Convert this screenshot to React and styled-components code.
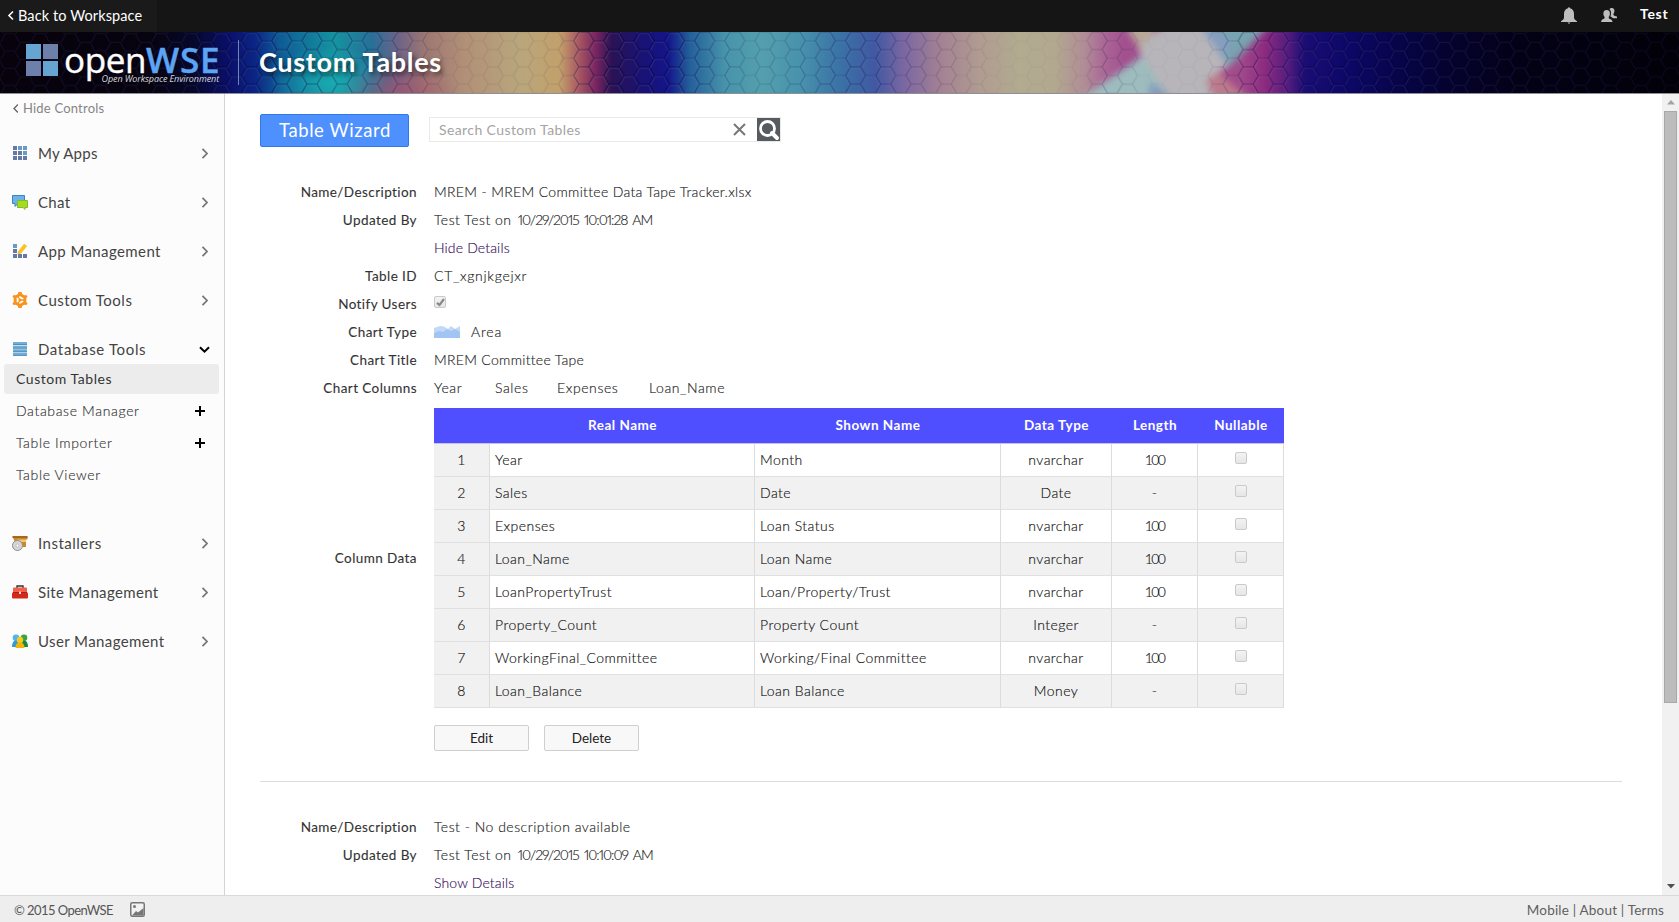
import React from "react";
import styled, { createGlobalStyle, css } from "styled-components";

const Global = createGlobalStyle`
  * { box-sizing: border-box; }
  html, body { margin: 0; height: 100%; overflow: hidden; }
  body { font-family: Lato, "Open Sans", sans-serif; font-size: 14px; color: #474747; background: #fff; }
  button, input, table { font-family: inherit; }
`;

const Page = styled.div`
  display: flex;
  flex-direction: column;
  width: 100vw;
  height: 100vh;
`;

const TopBar = styled.div`
  display: flex;
  justify-content: space-between;
  flex: 0 0 32px;
  background: #151515;
  color: #fff;
`;
const BackLink = styled.a`
  display: flex;
  align-items: center;
  gap: 4px;
  width: 157px;
  padding: 0 0 2px 7px;
  background: #1a1a1a;
  font-size: 14.5px;
  letter-spacing: 0.1px;
  white-space: nowrap;
`;
const TopActions = styled.div`
  display: flex;
  align-items: center;
  gap: 24px;
  padding: 0 10px 2px 0;
  svg { display: block; }
`;
const UserName = styled.span`
  width: 29px;
  padding-bottom: 2px;
  font-size: 14px;
  font-weight: 700;
  line-height: 18px;
  letter-spacing: 0.7px;
  margin-left: -1px;
`;

const Banner = styled.header`
  position: relative;
  display: flex;
  align-items: center;
  flex: 0 0 62px;
  padding-left: 26px;
  border-bottom: 1px solid #8f8f98;
  overflow: hidden;
`;
const Backdrop = styled.svg`
  position: absolute;
  inset: 0;
`;
const Logo = styled.div`
  position: relative;
  display: flex;
  width: 213px;
  height: 45px;
  border-right: 1px solid rgba(255, 255, 255, 0.45);
`;
const LogoTiles = styled.div`
  display: grid;
  grid-template-columns: 15px 15px;
  grid-template-rows: 15px 15px;
  gap: 2px;
  margin: 4px 6px 0 0;
`;
const Tile = styled.i`
  background: ${(p) => (p.$alt ? "#6d7fab" : "#66a5d2")};
`;
const LogoText = styled.div`
  display: flex;
  flex-direction: column;
  width: 155px;
  font-family: "Open Sans", "Noto Sans", sans-serif;
  color: #fff;
  white-space: nowrap;
`;
const LogoName = styled.div`
  height: 34px;
  font-size: 35px;
  line-height: 39px;
  letter-spacing: -0.4px;
  -webkit-text-stroke: 0.4px currentColor;
  b { font-weight: 600; color: #5ca5f5; letter-spacing: 0.8px; }
`;
const Tagline = styled.div`
  align-self: flex-end;
  font-size: 9px;
  line-height: 10px;
  font-style: italic;
  color: #d8d8dc;
  letter-spacing: -0.1px;
`;
const PageTitle = styled.h1`
  position: relative;
  margin: 0 0 2px 20px;
  font-size: 27px;
  font-weight: 700;
  line-height: 32px;
  letter-spacing: 0.7px;
  color: #fff;
  text-shadow: 2px 3px 5px rgba(0, 0, 0, 0.6);
`;

const Body = styled.div`
  display: flex;
  flex: 1 1 0;
  min-height: 0;
`;
const Sidebar = styled.nav`
  flex: 0 0 225px;
  border-right: 1px solid #d4d4d4;
  background: #fcfcfc;
`;
const HideControls = styled.a`
  display: flex;
  align-items: center;
  gap: 5px;
  height: 28px;
  padding-left: 12px;
  font-size: 13px;
  letter-spacing: 0.2px;
  color: #858585;
`;
const MenuItem = styled.a`
  display: flex;
  align-items: center;
  height: 30px;
  margin-top: ${(p) => p.$top ?? 19}px;
  padding: 0 14px 1px 12px;
  font-size: 15px;
  letter-spacing: ${(p) => p.$ls ?? 0.25}px;
  color: #444;
  > svg:first-child { flex: none; margin-right: 10px; }
  > svg:last-child { flex: none; margin: 2px 0 0 auto; }
`;
const SubMenu = styled.div`
  display: flex;
  flex-direction: column;
  gap: 2px;
  margin: 0 5px 38px 4px;
`;
const SubItem = styled.a`
  display: flex;
  align-items: center;
  justify-content: space-between;
  height: 30px;
  padding: 0 14px 1px 12px;
  border-radius: 3px;
  font-size: 14px;
  font-weight: 300;
  letter-spacing: 0.65px;
  color: #333;
  -webkit-text-stroke: 0.15px currentColor;
  ${(p) => p.$active && css`background: #ececec; font-weight: 400; letter-spacing: 0.55px; -webkit-text-stroke: 0;`}
`;

const Main = styled.main`
  flex: 1;
  min-width: 0;
  padding: 20px 40px 0 35px;
  overflow: hidden;
`;
const Tools = styled.div`
  display: flex;
  height: 33px;
`;
const WizardButton = styled.button`
  width: 149px;
  height: 33px;
  margin-right: 20px;
  padding: 0 0 1px 1px;
  border: 1px solid #3079ed;
  border-radius: 2px;
  background: #4d90fe;
  color: #fff;
  font-size: 18.5px;
  letter-spacing: 0.6px;
`;
const Search = styled.div`
  display: flex;
  align-items: center;
  width: 352px;
  height: 25px;
  margin-top: 3px;
  border: 1px solid #e9e9e9;
  padding-left: 9px;
  color: #a4a4a4;
  letter-spacing: 0.4px;
  > svg:nth-of-type(1) { margin-left: auto; margin-right: 11px; }
  > svg { flex: none; }
`;

const Entry = styled.section`
  display: grid;
  grid-template-columns: 157px 1fr;
  column-gap: 17px;
  grid-auto-rows: minmax(28px, auto);
  align-items: center;
  padding-top: ${(p) => p.$top}px;
`;
const Label = styled.div`
  text-align: right;
  margin-top: ${(p) => (p.$low ? 6 : 0)}px;
  font-size: 13.5px;
  color: #333;
  letter-spacing: 0.42px;
  -webkit-text-stroke: 0.1px currentColor;
`;
const Value = styled.div`
  display: flex;
  align-items: center;
  height: 28px;
  padding-bottom: 1px;
  color: #222;
  font-weight: 300;
  letter-spacing: ${(p) => p.$ls ?? 0.5}px;
  white-space: pre;
  -webkit-text-stroke: 0.15px currentColor;
`;
const DateText = styled.span`
  margin-left: 2px;
  font-variant-numeric: proportional-nums;
  letter-spacing: -1px;
  word-spacing: 2.5px;
`;
const DetailsLink = styled.a`
  color: #36105c;
  letter-spacing: 0.15px;
`;
const ChartColumn = styled.span`
  width: ${(p) => p.$w}px;
`;
const Check = styled.i`
  display: inline-flex;
  align-items: center;
  justify-content: center;
  width: 12px;
  height: 12px;
  margin-bottom: ${(p) => (p.$inCell ? 1 : 3)}px;
  border: 1px solid #cacaca;
  border-radius: 2px;
  background: linear-gradient(#f3f3f3, #e6e6e6);
`;

const Grid = styled.table`
  width: 850px;
  margin: 6px 0 0;
  table-layout: fixed;
  border-collapse: separate;
  border-spacing: 0;
  color: #111;
`;
const HeadCell = styled.th`
  height: 36px;
  padding: 0 0 2px;
  background: #4f4fff;
  border-bottom: 1px solid #c3c3ee;
  color: #fff;
  font-size: 13.5px;
  font-weight: 700;
  letter-spacing: 0.5px;
`;
const Cell = styled.td`
  height: 33px;
  padding: 0 5px 1px;
  border-right: 1px solid #dcdcdc;
  border-bottom: 1px solid #e0e0e0;
  text-align: ${(p) => (p.$left ? "left" : "center")};
  font-weight: 300;
  letter-spacing: ${(p) => (p.$digits ? -1.6 : 0.45)}px;
  -webkit-text-stroke: 0.15px currentColor;
  background: ${(p) => (p.$shade ? "#f1f1f1" : "#fff")};
`;
const Buttons = styled.div`
  display: flex;
  gap: 15px;
  margin-top: 17px;
`;
const SmallButton = styled.button`
  width: 95px;
  height: 26px;
  padding: 0 0 1px;
  border: 1px solid #cfcfcf;
  border-radius: 2px;
  background: #f8f8f8;
  color: #222;
  font-size: 13.5px;
`;
const Rule = styled.hr`
  height: 1px;
  margin: 30px 0 0;
  border: 0;
  background: #dcdcdc;
`;

const ScrollTrack = styled.div`
  display: flex;
  flex-direction: column;
  align-items: center;
  flex: 0 0 17px;
  background: #f1f1f1;
`;
const ScrollArrow = styled.div`
  display: flex;
  align-items: center;
  justify-content: center;
  height: 17px;
  margin-top: ${(p) => (p.$last ? "auto" : 0)};
`;
const Thumb = styled.div`
  width: 13px;
  height: 592px;
  border: 1px solid #a8a8a8;
  background: #bcbcbc;
`;

const Footer = styled.footer`
  display: flex;
  align-items: center;
  flex: 0 0 27px;
  padding: 1px 15px 0 14px;
  border-top: 1px solid #d9d9d9;
  background: #eee;
  color: #555;
  font-size: 13px;
  > svg { margin-left: 17px; }
`;
const Copyright = styled.span`
  width: 99px;
  letter-spacing: -0.55px;
  white-space: nowrap;
`;
const FooterLinks = styled.div`
  margin-left: auto;
  font-size: 13.5px;
  letter-spacing: 0.2px;
  color: #606060;
`;

const Chevron = ({ dir = "right", size = 10, color = "#777", w = 1.8 }) => {
  const d = { right: "M2.5 .8 7 5.5 2.5 10.2", left: "M6 1.5 2 5.5 6 9.5", down: "M1 3.2 5.5 7.7 10 3.2" }[dir];
  return (
    <svg width={size} height="11" viewBox={`0 0 ${size} 11`} fill="none" stroke={color} strokeWidth={w}>
      <path d={d} />
    </svg>
  );
};
const Plus = () => (
  <svg width="10" height="10"><path d="M5 0v10M0 5h10" stroke="#000" strokeWidth="2" /></svg>
);

const icons = {
  apps: (
    <g>
      {[0, 1, 2].map((r) => [0, 1, 2].map((c) => (
        <rect key={`${r}${c}`} x={1 + c * 5} y={1 + r * 5} width="4" height="4" fill={r + (2 - c) < 2 || (r === 0 && c === 1) ? "#6a9bc6" : "#6679a6"} />
      )))}
    </g>
  ),
  chat: (
    <g>
      <path d="M.5 1.5h12v8H6L3 12.500V9.500H.5z" fill="#6fb3e4" stroke="#3a86c4" />
      <path d="M5.500 6.500h10v7H13v2L11 13.500H5.500z" fill="#a6dc1c" stroke="#7dba35" />
    </g>
  ),
  manage: (
    <g fill="#6679a6">
      <path d="M1 1h4v4H1z" fill="#6a9bc6" />
      <path d="M1 6h4v4H1zM1 11h4v4H1zM6 11h4v4H6zM11 11h4v4h-4z" />
      <path d="M5.500 11.500 6.300 8 12 .8 15.200 3 9.500 10z" fill="#f8c623" />
      <path d="m5.500 11.500.8-3.500 3.200 2z" fill="#e9b46a" />
    </g>
  ),
  gear: (
    <g>
      <path d="M8 2.500 12.800 5.200v5.600L8 13.500 3.200 10.800V5.200z" fill="none" stroke="#f7941d" strokeWidth="3" strokeLinejoin="round" />
      <g fill="#f7941d"><rect x="6" y="0" width="4" height="3" rx="1" /><rect x="6" y="13" width="4" height="3" rx="1" /><circle cx="2.300" cy="4.500" r="1.600" /><circle cx="13.700" cy="4.500" r="1.600" /><circle cx="2.300" cy="11.500" r="1.600" /><circle cx="13.700" cy="11.500" r="1.600" /></g>
      <path d="M8 8h4M8 8 6 4.500M8 8l-2 3.500" stroke="#f7941d" strokeWidth="1.300" />
      <circle cx="8" cy="8" r="1.500" fill="#f7941d" />
    </g>
  ),
  database: (
    <g>{[1, 4.600, 8.200, 11.800].map((y) => <g key={y}><rect x="1" y={y} width="14" height="3" fill="#74aed6" /><rect x="1" y={y + 2} width="14" height="1" fill="#4f8fbd" /></g>)}</g>
  ),
  installers: (
    <g>
      <path d="M.5 1.500h15v3h-1.500V12H6L2 5z" fill="#c98a2f" />
      <path d="M.5 1h15v2H.5z" fill="#a8671c" />
      <path d="M5 4.500h9V7H6z" fill="#f0c878" />
      <circle cx="5.500" cy="10.500" r="5" fill="#d6d6d6" stroke="#8c8c8c" />
      <circle cx="5.500" cy="10.500" r="1.500" fill="#fff" stroke="#aaa" strokeWidth=".7" />
    </g>
  ),
  toolbox: (
    <g>
      <path d="M5 4V2h6v2" fill="none" stroke="#333" strokeWidth="1.400" />
      <rect x="1" y="3.500" width="14" height="6" rx="1" fill="#f0604c" />
      <rect x="0" y="8.500" width="16" height="6" rx="1" fill="#d3281c" />
      <path d="M1 8.500h14" stroke="#b01c14" />
      <path d="M7 7.500h2V10H7z" fill="#f4d9d0" />
    </g>
  ),
  users: (
    <g>
      <circle cx="4" cy="4.800" r="3.300" fill="#4fb5ea" /><path d="M0 14c0-5 2-6.500 4-6.500S8 9 8 14z" fill="#2f9bd8" />
      <circle cx="12" cy="4.800" r="3.300" fill="#3aa53f" /><path d="M8 14c0-5 2-6.500 4-6.500s4 1.500 4 6.500z" fill="#178a3a" />
      <circle cx="8" cy="7" r="3.200" fill="#f9c922" /><path d="M3.500 15c0-4 2-5.500 4.500-5.500s4.500 1.500 4.500 5.500z" fill="#f3b410" />
    </g>
  ),
};
const MenuIcon = ({ name }) => <svg width="16" height="16" viewBox="0 0 16 16">{icons[name]}</svg>;

const HEX = "M-10 0 -5 -8.650H5L10 0 5 8.650H-5z";
const SHINE = "M-9 1 -4.500 -7.400H4.500L9 1";
const hexCells = ["", "translate(30.200 0)", "translate(0 17.300)", "translate(30.200 17.300)", "translate(15.100 8.650)"];
const spectrum = [
  [0, "#07020b"], [150, "#07030f"], [195, "#06082c"], [228, "#0a0f68"], [255, "#0b2585"], [280, "#0f5c96"], [335, "#14939f"],
  [372, "#286f98"], [398, "#6d6386"], [425, "#9c7772"], [465, "#b19077"], [520, "#b9a67c"], [560, "#c2a06a"],
  [577, "#aa5e62"], [595, "#7c2760"], [612, "#2a1255"], [640, "#1a1272"], [668, "#13158a"], [690, "#24609a"],
  [725, "#4793ab"], [762, "#549fad"], [800, "#4892ac"], [840, "#3a72a6"], [875, "#4158a2"], [905, "#7c68a2"],
  [940, "#a38193"], [980, "#b09c90"], [1020, "#b2ab90"], [1055, "#b2a88f"], [1085, "#b08c96"], [1105, "#aa6595"], [1125, "#a2508e"],
  [1240, "#a24a8a"], [1265, "#8c2a80"], [1288, "#541c7e"], [1305, "#1a0d74"], [1345, "#0d0868"], [1400, "#070449"],
  [1450, "#05022e"], [1520, "#030115"], [1679, "#020108"],
];
const hexStrength = [
  [0, 0.4], [190, 0.5], [240, 0.6], [400, 0.35], [450, 0.1], [555, 0.12], [600, 0.75], [670, 0.65], [720, 0.3], [760, 0.2],
  [860, 0.4], [960, 0.16], [1000, 0.04], [1070, 0.05], [1110, 0.3], [1150, 0.03], [1205, 0.05], [1240, 0.45], [1400, 0.6], [1679, 0.3],
];
const BannerArt = () => (
  <Backdrop width="1679" height="61" viewBox="0 0 1679 61" preserveAspectRatio="none">
    <defs>
      <linearGradient id="spectrum" gradientUnits="userSpaceOnUse" x1="0" x2="1679" y1="0" y2="0">
        {spectrum.map(([x, c]) => <stop key={x} offset={x / 1679} stopColor={c} />)}
      </linearGradient>
      <radialGradient id="teal"><stop offset="0" stopColor="#1ab0b4" stopOpacity=".8" /><stop offset="1" stopColor="#1ab0b4" stopOpacity="0" /></radialGradient>
      <radialGradient id="rose"><stop offset="0" stopColor="#a8506c" stopOpacity=".7" /><stop offset="1" stopColor="#a8506c" stopOpacity="0" /></radialGradient>
      <pattern id="hexes" width="30.200" height="17.300" patternUnits="userSpaceOnUse" patternTransform="translate(10 9)">
        <g fill="none" stroke="#00003a" strokeOpacity=".45" strokeWidth="1.200">
          {hexCells.map((t) => <path key={t} d={HEX} transform={t} />)}
        </g>
        <g fill="none" stroke="#fff" strokeOpacity=".14">
          {hexCells.map((t) => <path key={t} d={SHINE} transform={t} />)}
        </g>
      </pattern>
      <linearGradient id="hexFade" gradientUnits="userSpaceOnUse" x1="0" x2="1679" y1="0" y2="0">
        {hexStrength.map(([x, o]) => <stop key={x} offset={x / 1679} stopColor="#fff" stopOpacity={o} />)}
      </linearGradient>
      <mask id="hexMask"><rect width="1679" height="61" fill="url(#hexFade)" /></mask>
      <filter id="soft" x="-20%" y="-50%" width="140%" height="200%"><feGaussianBlur stdDeviation="3.500" /></filter>
    </defs>
    <rect width="1679" height="61" fill="url(#spectrum)" />
    <ellipse cx="330" cy="50" rx="58" ry="36" fill="url(#teal)" />
    <ellipse cx="400" cy="62" rx="60" ry="34" fill="url(#rose)" />
    <g filter="url(#soft)">
      <path d="M1124 -8h30V20L1144 24z" fill="#b8a898" />
      <path d="M1178 -8h92L1230 34 1216 38 1180 10z" fill="#78a3b0" />
      <path d="M1076 70 1128 34 1150 18 1205 70z" fill="#9dbcbe" />
      <path d="M1150 50 1180 70h-30z" fill="#7f98bc" />
      <path d="M1196 -8h16L1232 12 1222 30 1204 14z" fill="#8a9cc4" fillOpacity=".7" />
      <path d="M1138 18 1164 -8h34L1228 34 1208 48 1218 70h-46z" fill="#b7b5b9" />
      <path d="M1206 48 1218 40 1252 70H1214z" fill="#bc7a8c" />
    </g>
    <rect width="1679" height="61" fill="url(#hexes)" mask="url(#hexMask)" />
  </Backdrop>
);

const columns = [
  ["Year", "Month", "nvarchar", "100"],
  ["Sales", "Date", "Date", "-"],
  ["Expenses", "Loan Status", "nvarchar", "100"],
  ["Loan_Name", "Loan Name", "nvarchar", "100"],
  ["LoanPropertyTrust", "Loan/Property/Trust", "nvarchar", "100"],
  ["Property_Count", "Property Count", "Integer", "-"],
  ["WorkingFinal_Committee", "Working/Final Committee", "nvarchar", "100"],
  ["Loan_Balance", "Loan Balance", "Money", "-"],
];

const Item = ({ icon, children, top, open, ls }) => (
  <MenuItem $top={top} $ls={ls}>
    <MenuIcon name={icon} />
    {children}
    {open ? <Chevron dir="down" size={11} color="#000" w={2} /> : <Chevron />}
  </MenuItem>
);

export default function App() {
  return (
    <Page>
      <Global />
      <TopBar>
        <BackLink><Chevron dir="left" size={7} color="#fff" w={1.6} />Back to Workspace</BackLink>
        <TopActions>
          <svg width="16" height="17" viewBox="0 0 16 17" fill="#bdbdbd">
            <path d="M7 1.200a1 1 0 0 1 2 0C12 2 13 4.300 13 7v3.500c0 1.500 1 2.500 3 3.700v.8H0v-.8c2-1.200 3-2.200 3-3.700V7c0-2.700 1-5 4-5.800zM6.500 15.500h3L8 17z" />
          </svg>
          <svg width="16" height="15" viewBox="0 0 17 16" fill="#bdbdbd">
            <path d="M10.500 0c2.500-.3 3.800 1 3.800 3 0 1.400-.4 2.500-1.100 3.300.1 1.700.5 2 3.800 2.700v2h-4.200c-.7-1-2-1.600-2.800-2 .8-2.200 1.400-5.500-1-8z" />
            <path d="M6 2c2.400 0 3.500 1.500 3.500 3.800 0 1.700-.6 3-1.300 3.700v1.500C10 12 12 12.300 12.300 15H0c.3-2.700 2-3 3.800-4V9.500C3 8.800 2.500 7.500 2.500 5.800 2.500 3.500 3.600 2 6 2z" />
          </svg>
          <UserName>Test</UserName>
        </TopActions>
      </TopBar>

      <Banner>
        <BannerArt />
        <Logo>
          <LogoTiles><Tile /><Tile $alt /><Tile $alt /><Tile /></LogoTiles>
          <LogoText>
            <LogoName>open<b>WSE</b></LogoName>
            <Tagline>Open Workspace Environment</Tagline>
          </LogoText>
        </Logo>
        <PageTitle>Custom Tables</PageTitle>
      </Banner>

      <Body>
        <Sidebar>
          <HideControls><Chevron dir="left" size={6} color="#666" w={1.400} />Hide Controls</HideControls>
          <Item icon="apps" top={16}>My Apps</Item>
          <Item icon="chat" ls={0.35}>Chat</Item>
          <Item icon="manage" ls={0.4}>App Management</Item>
          <Item icon="gear" ls={0.5}>Custom Tools</Item>
          <Item icon="database" ls={0.65} open>Database Tools</Item>
          <SubMenu>
            <SubItem $active>Custom Tables</SubItem>
            <SubItem>Database Manager<Plus /></SubItem>
            <SubItem>Table Importer<Plus /></SubItem>
            <SubItem>Table Viewer</SubItem>
          </SubMenu>
          <Item icon="installers" top={0} ls={0.5}>Installers</Item>
          <Item icon="toolbox" ls={0.35}>Site Management</Item>
          <Item icon="users" ls={0.4}>User Management</Item>
        </Sidebar>

        <Main>
          <Tools>
            <WizardButton>Table Wizard</WizardButton>
            <Search>
              Search Custom Tables
              <svg width="13" height="13" stroke="#777" strokeWidth="2"><path d="m1 1 11 11M12 1 1 12" /></svg>
              <svg width="23" height="23" viewBox="0 0 23 23" fill="none" stroke="#fff">
                <path d="M0 0h23v23H0z" fill="#565b61" stroke="none" />
                <circle cx="10.500" cy="10.500" r="7" strokeWidth="2.800" />
                <path d="m15 15 5 5" strokeWidth="4" strokeLinecap="round" />
              </svg>
            </Search>
          </Tools>

          <Entry $top={31}>
            <Label>Name/Description</Label>
            <Value $ls={0.33}>MREM - MREM Committee Data Tape Tracker.xlsx</Value>
            <Label>Updated By</Label>
            <Value>Test Test on <DateText>10/29/2015 10:01:28 AM</DateText></Value>
            <span />
            <Value><DetailsLink>Hide Details</DetailsLink></Value>
            <Label>Table ID</Label>
            <Value $ls={0.7}>CT_xgnjkgejxr</Value>
            <Label>Notify Users</Label>
            <Value>
              <Check><svg width="9" height="9" fill="none" stroke="#888" strokeWidth="2.200"><path d="M1 4.800 3.500 7 8 1" /></svg></Check>
            </Value>
            <Label>Chart Type</Label>
            <Value $ls={0.8}>
              <ChartColumn $w={37}>
                <svg width="26" height="13" viewBox="0 0 26 13" display="block">
                  <path d="M0 3 6 1l4 .5L14 4l3-3 4 3 5-3v12H0z" fill="#c3d8f6" />
                  <path d="M0 8 5 6l4 1 4-3 4 2 4-2 5 3v6H0z" fill="#a2c4f2" />
                </svg>
              </ChartColumn>
              Area
            </Value>
            <Label>Chart Title</Label>
            <Value $ls={0.3}>MREM Committee Tape</Value>
            <Label>Chart Columns</Label>
            <Value $ls={0.6}>
              <ChartColumn $w={61}>Year</ChartColumn>
              <ChartColumn $w={62}>Sales</ChartColumn>
              <ChartColumn $w={92}>Expenses</ChartColumn>
              <ChartColumn $w={80}>Loan_Name</ChartColumn>
            </Value>
            <Label $low>Column Data</Label>
            <Grid>
              <colgroup>
                {[56, 265, 246, 111, 86, 86].map((w, i) => <col key={i} width={w} />)}
              </colgroup>
              <thead>
                <tr>{["", "Real Name", "Shown Name", "Data Type", "Length", "Nullable"].map((h) => <HeadCell key={h}>{h}</HeadCell>)}</tr>
              </thead>
              <tbody>
                {columns.map(([real, shown, type, length], i) => {
                  const shade = i % 2 === 1;
                  return (
                    <tr key={real}>
                      <Cell $shade>{i + 1}</Cell>
                      <Cell $left $shade={shade}>{real}</Cell>
                      <Cell $left $shade={shade}>{shown}</Cell>
                      <Cell $shade={shade}>{type}</Cell>
                      <Cell $shade={shade} $digits={length !== "-"}>{length}</Cell>
                      <Cell $shade={shade}><Check $inCell /></Cell>
                    </tr>
                  );
                })}
              </tbody>
            </Grid>
            <span />
            <Buttons><SmallButton>Edit</SmallButton><SmallButton>Delete</SmallButton></Buttons>
          </Entry>
          <Rule />
          <Entry $top={31}>
            <Label>Name/Description</Label>
            <Value>Test - No description available</Value>
            <Label>Updated By</Label>
            <Value>Test Test on <DateText>10/29/2015 10:10:09 AM</DateText></Value>
            <span />
            <Value><DetailsLink>Show Details</DetailsLink></Value>
          </Entry>
        </Main>

        <ScrollTrack>
          <ScrollArrow><svg width="8" height="5"><path d="M4 0 8 4.500H0z" fill="#a3a3a3" /></svg></ScrollArrow>
          <Thumb />
          <ScrollArrow $last><svg width="8" height="5"><path d="M0 0h8L4 4.500z" fill="#505050" /></svg></ScrollArrow>
        </ScrollTrack>
      </Body>

      <Footer>
        <Copyright>© 2015 OpenWSE</Copyright>
        <svg width="15" height="15" viewBox="0 0 15 15">
          <rect x=".75" y=".75" width="13.500" height="13.500" rx="1.500" fill="#f2f2f2" stroke="#777" strokeWidth="1.500" />
          <circle cx="4.500" cy="4.500" r="1.500" fill="#777" />
          <path d="M2 13.500 6 9l2 1.500L13.500 6v7.500z" fill="#777" />
        </svg>
        <FooterLinks>Mobile | About | Terms</FooterLinks>
      </Footer>
    </Page>
  );
}
